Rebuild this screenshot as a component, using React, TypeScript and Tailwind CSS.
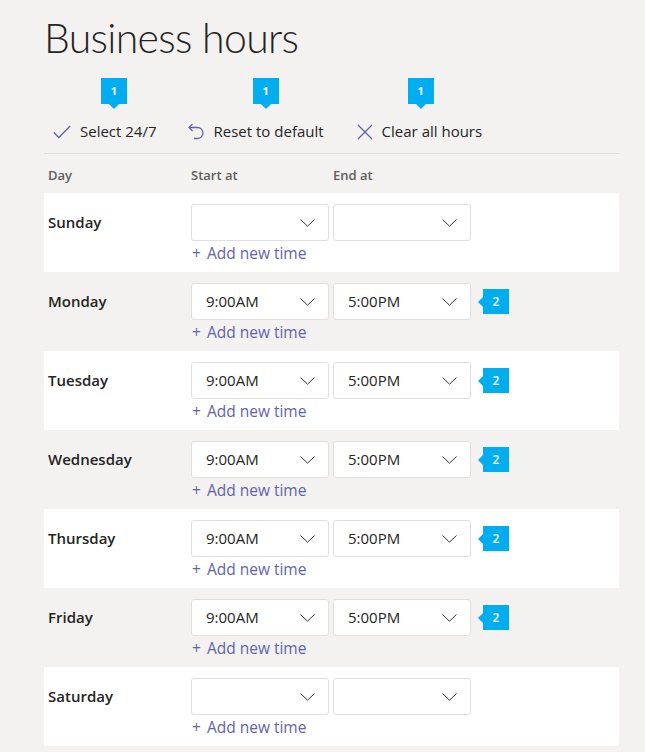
import React from "react";

const font = { fontFamily: '"Open Sans", "Noto Sans", sans-serif' };

type Day = { name: string; start: string; end: string; badge?: boolean };

const days: Day[] = [
  { name: "Sunday", start: "", end: "" },
  { name: "Monday", start: "9:00AM", end: "5:00PM", badge: true },
  { name: "Tuesday", start: "9:00AM", end: "5:00PM", badge: true },
  { name: "Wednesday", start: "9:00AM", end: "5:00PM", badge: true },
  { name: "Thursday", start: "9:00AM", end: "5:00PM", badge: true },
  { name: "Friday", start: "9:00AM", end: "5:00PM", badge: true },
  { name: "Saturday", start: "", end: "" },
];

function Chevron() {
  return (
    <svg width="15" height="8" viewBox="0 0 15 8" fill="none">
      <path d="M0.5 0.5 L7.5 7.2 L14.5 0.5" stroke="#323130" strokeWidth="1" />
    </svg>
  );
}

function Dropdown({ value }: { value: string }) {
  return (
    <div className="flex h-[37px] w-[138px] items-center justify-between rounded-[3px] border border-[#e1dfdd] bg-white pl-[14px] pr-[13px]">
      <span className="text-[15px] text-[#252423]">{value}</span>
      <Chevron />
    </div>
  );
}

function BadgeDown({ n }: { n: string }) {
  return (
    <div className="relative flex h-[26px] w-[26px] items-center justify-center bg-[#00adef] text-[11px] font-bold text-white">
      {n}
      <span className="absolute left-1/2 top-full -ml-[5px] h-0 w-0 border-x-[5px] border-t-[5px] border-x-transparent border-t-[#00adef]" />
    </div>
  );
}

function BadgeLeft({ n }: { n: string }) {
  return (
    <div className="relative flex h-[25px] w-[26px] items-center justify-center bg-[#00adef] text-[12px] font-semibold text-white">
      {n}
      <span className="absolute right-full top-1/2 -mt-[5px] h-0 w-0 border-y-[5px] border-r-[5px] border-y-transparent border-r-[#00adef]" />
    </div>
  );
}

function ToolButton({ icon, label, badgeLeft }: { icon: React.ReactNode; label: string; badgeLeft: string }) {
  return (
    <div className="relative flex items-center gap-[9px]">
      <div className={`absolute bottom-[39px] ${badgeLeft}`}>
        <BadgeDown n="1" />
      </div>
      {icon}
      <span className="text-[15px] text-[#252423]">{label}</span>
    </div>
  );
}

export default function App() {
  return (
    <div className="min-h-screen bg-[#f3f2f1] pb-[6px]" style={font}>
      <div className="ml-[44px] w-[575px]">
        <h1
          className="pt-[13px] text-[41px] font-light leading-[50px] tracking-[-0.7px] text-[#252423]"
          style={{ fontFamily: 'Lato, "Open Sans", sans-serif' }}
        >
          Business hours
        </h1>

        <div className="mt-[47px] flex h-[44px] items-center border-b border-[#e1dfdd] pl-[9px]">
          <ToolButton
            badgeLeft="left-[48px]"
            label="Select 24/7"
            icon={
              <svg width="18" height="14" viewBox="0 0 18 14" fill="none">
                <path d="M0.8 7.5 L5.8 12.5 L17.2 1" stroke="#6264a7" strokeWidth="1.3" />
              </svg>
            }
          />
          <div className="ml-[31px]">
            <ToolButton
              badgeLeft="left-[65px]"
              label="Reset to default"
              icon={
                <svg width="17" height="17" viewBox="0 0 17 17" fill="none">
                  <path d="M4.5 1 L1 4.5 L4.5 8" stroke="#6264a7" strokeWidth="1.3" />
                  <path d="M1.2 4.5 H9.5 A5.5 5.5 0 0 1 9.5 15.5 H6" stroke="#6264a7" strokeWidth="1.3" />
                </svg>
              }
            />
          </div>
          <div className="ml-[33px]">
            <ToolButton
              badgeLeft="left-[51px]"
              label="Clear all hours"
              icon={
                <svg width="16" height="16" viewBox="0 0 16 16" fill="none">
                  <path d="M1 1 L15 15 M15 1 L1 15" stroke="#6264a7" strokeWidth="1.3" />
                </svg>
              }
            />
          </div>
        </div>

        <div className="flex h-[39px] items-center pl-[4px] pt-[4px] text-[13px] font-semibold text-[#605e5c]">
          <span className="w-[143px]">Day</span>
          <span className="w-[142px]">Start at</span>
          <span>End at</span>
        </div>

        {days.map((d, i) => (
          <div key={d.name} className={`flex h-[79px] pt-[11px] ${i % 2 === 0 ? "bg-white" : ""}`}>
            <div className="flex h-[37px] w-[147px] items-center pl-[4px] text-[15px] font-semibold text-[#252423]">
              {d.name}
            </div>
            <div className="flex flex-col">
              <div className="flex items-center gap-[4px]">
                <Dropdown value={d.start} />
                <Dropdown value={d.end} />
                {d.badge && (
                  <div className="ml-[8px]">
                    <BadgeLeft n="2" />
                  </div>
                )}
              </div>
              <div className="mt-[1px] flex pl-[1px] text-[15.5px] leading-[22px] text-[#6264a7]">
                <span>+</span>
                <span className="ml-[6px]">Add new time</span>
              </div>
            </div>
          </div>
        ))}
      </div>
    </div>
  );
}
